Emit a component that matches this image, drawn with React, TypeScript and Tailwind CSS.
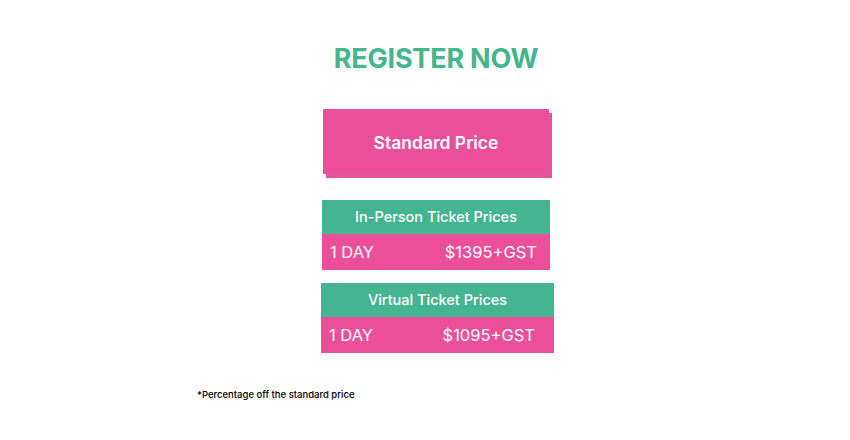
export default function App() {
  const tickets = [
    { title: 'In-Person Ticket Prices', price: '$1395+GST', width: 'w-[228px]', ml: 'ml-0', pr: 'pr-[13px]' },
    { title: 'Virtual Ticket Prices', price: '$1095+GST', width: 'w-[233px]', ml: 'ml-[3px]', pr: 'pr-[19px]' },
  ]

  return (
    <div className="w-[850px] h-[440px] bg-white font-['Inter',sans-serif] flex flex-col">
      <div className="flex flex-col items-center pl-[22px] pt-[42px]">
        <h1 className="text-[27px] leading-[34px] font-bold text-[#45b58f] tracking-[-0.2px]">
          REGISTER NOW
        </h1>

        {/* Standard price card */}
        <div className="mt-[33px] w-[226px] h-[65px] pt-[3px] bg-[#ec4f99] shadow-[3px_4px_0_#e3559a] flex items-center justify-center">
          <span className="text-white text-[17.5px] font-semibold">Standard Price</span>
        </div>

        {/* Ticket tables */}
        <div className="flex flex-col items-center mt-[26px] gap-[13px]">
          {tickets.map((t, i) => (
            <div key={i} className={`${t.width} ${t.ml}`}>
              <div className="h-[34px] bg-[#45b591] flex items-center justify-center text-white text-[14.5px] font-medium">
                {t.title}
              </div>
              <div className={`h-[36px] bg-[#ec4f99] flex items-center justify-between pl-[8px] ${t.pr} text-white text-[16.5px]`}>
                <span>1 DAY</span>
                <span>{t.price}</span>
              </div>
            </div>
          ))}
        </div>
      </div>

      <p className="ml-[197px] mt-[35px] text-[9.5px] font-medium text-black">
        *Percentage off the standard price
      </p>
    </div>
  )
}
